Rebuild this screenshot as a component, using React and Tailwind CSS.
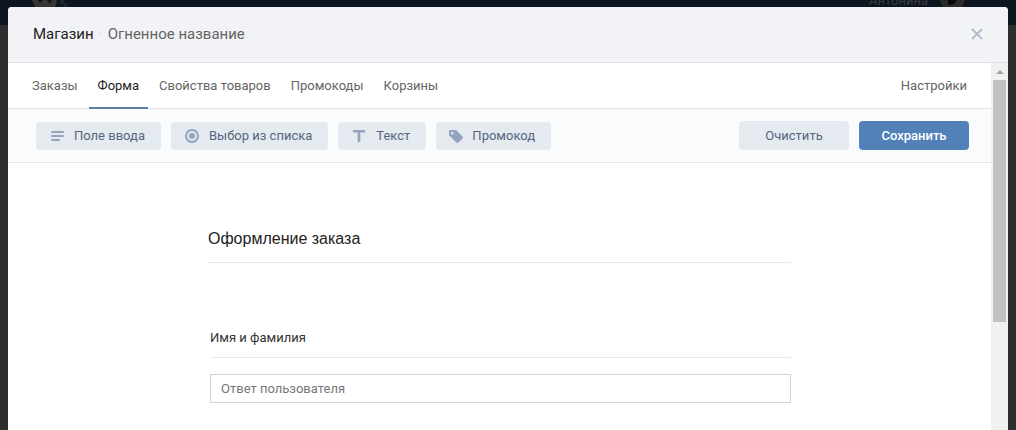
import React, { useState } from 'react';

const TABS = ['Заказы', 'Форма', 'Свойства товаров', 'Промокоды', 'Корзины'];

const InputIcon = () => (
    <svg width="16" height="16" viewBox="0 0 16 16" fill="#93a3bc" aria-hidden="true">
        <rect x="2" y="3" width="13" height="2" rx="1" />
        <rect x="2" y="7" width="13" height="2" rx="1" />
        <rect x="2" y="11" width="9" height="2" rx="1" />
    </svg>
);

const RadioIcon = () => (
    <svg width="16" height="16" viewBox="0 0 16 16" aria-hidden="true">
        <circle cx="8" cy="8" r="6" fill="none" stroke="#93a3bc" strokeWidth="2" />
        <circle cx="8" cy="8" r="3" fill="#93a3bc" />
    </svg>
);

const TextIcon = () => (
    <svg width="16" height="16" viewBox="0 0 16 16" fill="#93a3bc" aria-hidden="true">
        <path d="M2 2h12v2.500H9.300V14H6.700V4.500H2z" />
    </svg>
);

const TagIcon = () => (
    <svg width="14" height="16" viewBox="1 0 14 16" fill="#93a3bc" aria-hidden="true">
        <path
            fillRule="evenodd"
            d="M2.500 2H7.400c.4 0 .8.200 1.100.5l6 6c.6.600.6 1.500 0 2.100l-4 4c-.6.600-1.500.600-2.100 0l-6-6C1.200 8.300 1 7.900 1 7.500V3.500C1 2.700 1.700 2 2.500 2zM4.300 4a1.300 1.300 0 1 0 0 2.600 1.300 1.300 0 0 0 0-2.600z"
        />
    </svg>
);

const TOOLS = [
    { label: 'Поле ввода', Icon: InputIcon },
    { label: 'Выбор из списка', Icon: RadioIcon },
    { label: 'Текст', Icon: TextIcon },
    { label: 'Промокод', Icon: TagIcon },
];

// Site header peeking out above the dialog, dimmed by the overlay
const DimmedHeader = () => (
    <div className="h-[7px] overflow-hidden flex items-end justify-between pl-6 pr-[43px]" aria-hidden="true">
        <svg width="36" height="7" viewBox="0 0 36 7" fill="#383635">
            <path d="M0 0h6l2 3 3-3h4l3 4 2-4h4l1 2-2 5H3z" />
            <path d="M28 0h4v3h3v4h-3V4h-4z" opacity=".5" />
        </svg>
        <div className="flex items-end gap-3">
            <span className="leading-3 text-[#3a3e43]">Антонина</span>
            <svg width="25" height="7" viewBox="0 0 25 7" fill="#2c2b2b">
                <path d="M0 0h25l-3 7H3z" />
                <path d="M8 0h9l-3 4-6 1z" fill="#060606" />
            </svg>
        </div>
    </div>
);

// Decorative scroll track at the right edge of the dialog body
const ScrollTrack = () => (
    <div className="w-[17px] shrink-0 bg-[#f1f1f1] flex flex-col items-center" aria-hidden="true">
        <div className="h-[17px] flex items-center">
            <svg width="8" height="4" viewBox="0 0 8 4" fill="#a3a3a3">
                <path d="M4 0l4 4H0z" />
            </svg>
        </div>
        <div className="w-[13px] h-[242px] bg-[#c1c1c1]"></div>
    </div>
);

const App = () => {
    const [activeTab, setActiveTab] = useState('Форма');
    const [answer, setAnswer] = useState('');

    return (
        <div className="min-h-screen flex flex-col bg-[#2e2e2e] bg-linear-to-b from-[#0d1520] from-[25px] to-[#2e2e2e] to-[25px] px-2 font-['Roboto',sans-serif] text-[13px] leading-4">
            <DimmedHeader />
            <div role="dialog" aria-labelledby="dialog-title" className="flex-1 flex flex-col bg-white rounded-t overflow-hidden">
                {/* Header */}
                <header className="h-14 bg-[#f2f3f6] border-b border-[#dfe1e6] flex items-center justify-between pl-[25px] pr-6 pb-[2px]">
                    <h1 id="dialog-title" className="text-[15px] leading-5 text-[#222222] flex">
                        Магазин
                        <span className="w-[14px] text-center text-[#d0d3d8]">·</span>
                        <span className="text-[#656565]">Огненное название</span>
                    </h1>
                    <button type="button" aria-label="Закрыть" className="cursor-pointer">
                        <svg width="14" height="14" viewBox="0 0 14 14" stroke="#b3bccb" strokeWidth="2" fill="none">
                            <path d="M2 2l10 10M12 2L2 12" />
                        </svg>
                    </button>
                </header>

                <div className="flex-1 flex">
                    <main className="flex-1 min-w-0">
                        {/* Tabs */}
                        <nav className="h-[46px] border-b border-[#dfe1e6] flex justify-between px-[15px]">
                            <div className="flex gap-[2px]">
                                {TABS.map((tab) => (
                                    <button
                                        key={tab}
                                        type="button"
                                        onClick={() => setActiveTab(tab)}
                                        className={`h-[46px] px-[9px] border-y-2 border-t-transparent cursor-pointer ${
                                            tab === activeTab ? 'border-b-[#5d7fa5] text-[#222222]' : 'border-b-transparent text-[#656565]'
                                        }`}
                                    >
                                        {tab}
                                    </button>
                                ))}
                            </div>
                            <button type="button" className="px-[9px] text-[#656565] cursor-pointer">Настройки</button>
                        </nav>

                        {/* Toolbar */}
                        <div className="h-[54px] bg-[#fafbfd] border-b border-[#e1e3e8] flex items-center justify-between pl-7 pr-[22px]">
                            <div className="flex gap-[10px]">
                                {TOOLS.map(({ label, Icon }) => (
                                    <button
                                        key={label}
                                        type="button"
                                        className="h-7 rounded bg-[#e5e9f0] text-[#55677d] pl-[13px] pr-4 flex items-center gap-[9px] cursor-pointer"
                                    >
                                        <Icon />
                                        {label}
                                    </button>
                                ))}
                            </div>
                            <div className="flex gap-[10px]">
                                <button type="button" className="w-[110px] h-[29px] rounded bg-[#e5e9f0] text-[#55677d] cursor-pointer">Очистить</button>
                                <button type="button" className="w-[110px] h-[29px] rounded bg-[#5181b8] text-white font-medium cursor-pointer">Сохранить</button>
                            </div>
                        </div>

                        {/* Order form */}
                        <form className="max-w-[583px] mx-auto pt-16">
                            <h2 className="font-['Liberation_Sans',sans-serif] text-base leading-6 text-[#222222] pb-[11px] border-b border-[#e7e8ec]">
                                Оформление заказа
                            </h2>
                            <div className="pt-[67px] pl-[2px]">
                                <label htmlFor="full-name" className="block pb-[11px] border-b border-[#e7e8ec] text-[#333333]">
                                    Имя и фамилия
                                </label>
                                <input
                                    id="full-name"
                                    type="text"
                                    value={answer}
                                    onChange={(e) => setAnswer(e.target.value)}
                                    placeholder="Ответ пользователя"
                                    className="mt-4 w-full h-[29px] border border-[#d3d3d3] px-[10px] outline-none placeholder:text-[#777777]"
                                />
                            </div>
                        </form>
                    </main>
                    <ScrollTrack />
                </div>
            </div>
        </div>
    );
};

export default App;
